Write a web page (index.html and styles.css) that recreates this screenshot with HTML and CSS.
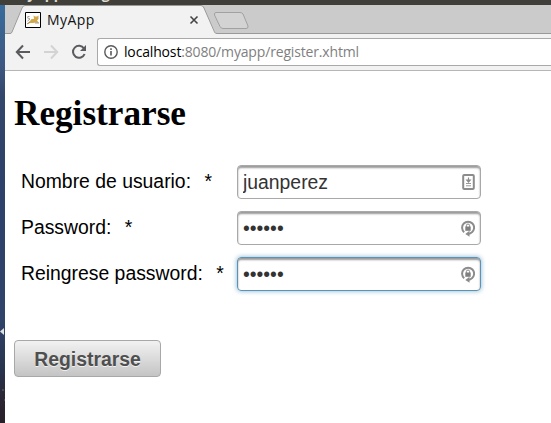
FILE: index.html
```html
<!DOCTYPE html>
<html lang="es">
<head>
<meta charset="utf-8">
<title>MyApp</title>
<link rel="stylesheet" href="styles.css">
</head>
<body>
<div class="desktop">
  <header class="titlebar"><span>MyApp - Google Chrome</span></header>
  <div class="workspace">
    <aside class="wallpaper">
      <svg width="5" height="418" viewBox="0 5 5 418">
        <path d="M0 331.500 4 328v7z" fill="#dce0e4"/>
        <path d="M2 390h2M4 400h1" stroke="#6b6b62"/>
      </svg>
    </aside>
    <main class="browser">
      <div class="tabs">
        <svg class="tab-shape" width="546" height="29" viewBox="5 5 546 29">
          <path d="M5 33.500H11L22 7Q23 5.500 25 5.500H201Q203 5.500 204 8L215 32Q215.500 33.500 217 33.500H551V34H5z" fill="#f2f2f2"/>
          <path d="M5 33.500H10Q11.500 33.500 12 32L22 8Q23 5.500 25 5.500H201Q203 5.500 204 8L214.500 32Q215 33.500 217 33.500H551" fill="none" stroke="#999"/>
          <path d="M216 12.500H240Q242 12.500 243 14L248 26Q248.500 28.500 246 28.500H223Q221 28.500 220 26.500L214.500 15Q214 12.500 216 12.500z" fill="#d3d3d3" stroke="#a1a1a1"/>
        </svg>
        <div class="tab">
          <svg class="favicon" width="16" height="16" viewBox="0 0 16 16">
            <path d="M.5.500h15v15H.5z" fill="#fff" stroke="#000"/>
            <path d="M8.500 3.500 10 4.500h2l1.500-1v3.500L12 8.500l2 2.500-3-.5-3 .5-3 0-2 1H2l3-3 1.500-2H9z" fill="#d3a84b"/>
            <path d="M2 5.500 5 7 2.500 9M2 12l3-2m5 1h4M2.500 4.500h2" stroke="#8d8777" stroke-width=".8" fill="none"/>
          </svg>
          <span class="tab-name">MyApp</span>
          <svg class="close" width="10" height="10" viewBox="0 0 10 10"><path d="m1.500 1.500 7 7m0-7-7 7" stroke="#444" stroke-width="1.600"/></svg>
        </div>
      </div>
      <div class="toolbar">
        <svg class="nav" width="76" height="20" viewBox="15 42 76 20" fill="none" stroke-width="2">
          <path d="M30 52H17M23 45.500 16.800 52 23 58.500" stroke="#5a5a5f"/>
          <path d="M44 52h13M51 45.500 57.200 52 51 58.500" stroke="#d3d3d3"/>
          <path d="M84 48.500A6 6 0 1 0 84.600 54" stroke="#5a5a5f"/>
          <path d="M86 45v6h-6z" fill="#5a5a5f"/>
        </svg>
        <div class="address">
          <svg width="14" height="14" viewBox="0 0 14 14"><circle cx="7" cy="7" r="6.200" fill="none" stroke="#5a5a5a" stroke-width="1.400"/><path d="M7 6v4.500M7 3.300v1.600" stroke="#5a5a5a" stroke-width="1.600"/></svg>
          <span class="url"><b>localhost</b>:8080/myapp/register.xhtml</span>
        </div>
      </div>
      <section class="page">
        <h1>Registrarse</h1>
        <form>
          <div class="fields">
            <label for="user">Nombre de usuario: <i>*</i></label>
            <div class="field"><input id="user" type="text" value="juanperez">
              <svg width="13" height="16" viewBox="0 0 13 16"><rect x="1.200" y="1" width="10.600" height="14" rx="1" fill="none" stroke="#8c8c8c" stroke-width="2"/><path d="M6.500 3.500v3M4.800 6h3.400L6.500 8z" stroke="#8c8c8c" stroke-width="1.200" fill="#8c8c8c"/><path d="M4 9.500h5M4 11.800h5" stroke="#999"/></svg></div>
            <label for="pass">Password: <i>*</i></label>
            <div class="field"><input id="pass" type="password" value="secret">
              <svg width="14" height="17" viewBox="0 0 14 17"><path d="M3.200 12.200A6 6 0 1 1 11 12.200Q9.500 14 7 14" fill="none" stroke="#8c8c8c" stroke-width="2"/><path d="M8.500 10.800v6L4.300 14z" fill="#8c8c8c"/><path d="M4.300 6.500h5.400v4.300H4.300z" fill="#808080"/><path d="M5.400 7V5.600a1.600 1.600 0 0 1 3.200 0V7" fill="none" stroke="#888"/></svg></div>
            <label for="again">Reingrese password: <i>*</i></label>
            <div class="field active"><input id="again" type="password" value="secret">
              <svg width="14" height="17" viewBox="0 0 14 17"><path d="M3.200 12.200A6 6 0 1 1 11 12.200Q9.500 14 7 14" fill="none" stroke="#8c8c8c" stroke-width="2"/><path d="M8.500 10.800v6L4.300 14z" fill="#8c8c8c"/><path d="M4.300 6.500h5.400v4.300H4.300z" fill="#808080"/><path d="M5.400 7V5.600a1.600 1.600 0 0 1 3.200 0V7" fill="none" stroke="#888"/></svg></div>
          </div>
          <button type="button">Registrarse</button>
        </form>
      </section>
    </main>
  </div>
</div>
</body>
</html>
```
FILE: styles.css
```css
* { box-sizing: border-box; }
body { margin: 0; background: #fff; }
.desktop { width: 551px; height: 423px; overflow: hidden; }
.titlebar { height: 5px; overflow: hidden; background: #403f39; color: #dfdbd2; font: bold 14px/18px "Open Sans", sans-serif; }
.titlebar span { display: block; margin: -15px 0 0 14px; }
.workspace { display: flex; height: 418px; }
.wallpaper { width: 5px; background: linear-gradient(#376b9c 0, #3e5780 15%, #33466b 22%, #2d4169 45%, #30446a 75%, #28324c 88%, #2c2532 95%, #28202b); }
.wallpaper svg { display: block; }
.browser { width: 546px; background: #fff; }
.tabs { position: relative; height: 29px; background: #cbcbcb; }
.tab-shape { position: absolute; inset: 0; }
.tab { position: relative; display: flex; align-items: center; width: 194px; height: 29px; padding-left: 20px; }
.tab-name { margin-left: 6px; font: 14px/20px "Open Sans", sans-serif; letter-spacing: .45px; color: #111; }
.close { margin-left: auto; }
.toolbar { display: flex; height: 37px; padding: 4px 0 0 10px; background: #f2f2f2; border-bottom: 1px solid #b6b6b6; }
.nav { margin-top: 4px; }
.address { display: flex; align-items: center; flex: 1; height: 28px; margin-left: 6px; padding-left: 6px; background: #fff; border: 1px solid #a9a9a9; border-right: 0; border-radius: 3px 0 0 3px; }
.url { margin-left: 6px; font: 14px/20px "Open Sans", sans-serif; letter-spacing: -.16px; color: #808080; white-space: nowrap; }
.url b { font-weight: 400; color: #000; }
.page { padding: 23px 9px 0; font: 19.36px/22px "Liberation Sans", Arial, sans-serif; color: #000; }
h1 { margin: 0; font: bold 35.2px/40px "Liberation Serif", serif; }
.fields { display: grid; grid-template-columns: 216px 244px; grid-auto-rows: 34px; row-gap: 12px; align-items: center; margin: 31px 0 0 7px; }
.fields label { white-space: nowrap; padding-bottom: 2px; }
.fields i { margin-left: 8px; font-style: normal; }
.field { display: flex; align-items: center; height: 34px; padding: 0 5px 0 5px; border: 1px solid #a8a8a8; border-radius: 4px; box-shadow: inset 0 2px 2px #999; }
.field input { flex: 1; min-width: 0; height: 28px; padding: 0; border: 0; outline: 0; background: none; color: #333; font: 19.36px/24px "Liberation Sans", Arial, sans-serif; }
.active { border-color: #5a93b5; box-shadow: 0 0 5px #85b2cb, inset 0 2px 2px #999; }
button { display: block; width: 147px; height: 37px; margin-top: 49px; padding: 0; border: 1px solid #a8a8a8; border-radius: 4px; background: linear-gradient(#f2f2f2, #c4c4c4); color: #4f4f4f; font: bold 19.36px/22px "Liberation Sans", Arial, sans-serif; text-shadow: 0 1px 0 rgba(255, 255, 255, .7); }
```
